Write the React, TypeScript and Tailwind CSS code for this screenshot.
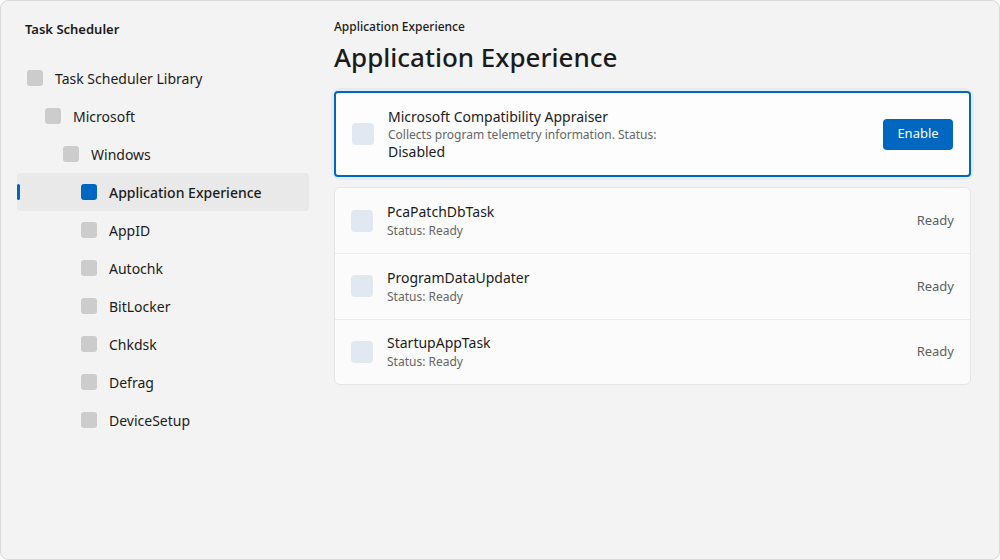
import React from "react";

const tree = [
  { label: "Task Scheduler Library", level: 0 },
  { label: "Microsoft", level: 1 },
  { label: "Windows", level: 2 },
  { label: "Application Experience", level: 3, selected: true },
  { label: "AppID", level: 3 },
  { label: "Autochk", level: 3 },
  { label: "BitLocker", level: 3 },
  { label: "Chkdsk", level: 3 },
  { label: "Defrag", level: 3 },
  { label: "DeviceSetup", level: 3 },
];
const pads = ["pl-[10px]", "pl-[28px]", "pl-[46px]", "pl-[64px]"];

const tasks = ["PcaPatchDbTask", "ProgramDataUpdater", "StartupAppTask"];

export default function App() {
  return (
    <div
      className="w-[1000px] h-[560px] bg-[#f3f3f3] border border-[#d9d9d9] rounded-lg flex text-[#1b1b1b] overflow-hidden"
      style={{ fontFamily: '"Segoe UI", "Noto Sans", "Open Sans", sans-serif' }}
    >
      <div className="w-[316px] shrink-0 pl-4 pr-2">
        <div className="pl-2 pt-[19px] text-[13px] font-semibold h-[58px]">Task Scheduler</div>
        <div className="flex flex-col">
          {tree.map((t) => (
            <div
              key={t.label}
              className={`relative h-[38px] flex items-center gap-3 rounded ${pads[t.level]} ${t.selected ? "bg-[#e9e9e9] font-medium" : ""}`}
            >
              {t.selected && <div className="absolute left-0 top-[11px] w-[3px] h-4 rounded bg-[#0067c0]" />}
              <div className={`w-4 h-4 rounded-[3px] ${t.selected ? "bg-[#0067c0]" : "bg-[#cccccc]"}`} />
              <span className="text-[14px]">{t.label}</span>
            </div>
          ))}
        </div>
      </div>
      <div className="flex-1 pl-[17px] pr-7">
        <div className="pt-[17px] text-[12px] font-medium">Application Experience</div>
        <div className="text-[26px] font-medium mt-[3px] leading-[36px]">Application Experience</div>
        <div className="mt-[16px] rounded-md ring-[3px] ring-[#e4ebf3]">
          <div className="h-[86px] border-2 border-[#0067c0] rounded bg-[#fdfdfd] flex items-center pl-4 pr-4">
            <div className="w-[22px] h-[22px] rounded bg-[#e1e8f2]" />
            <div className="ml-[14px] flex-1 leading-tight">
              <div className="text-[14px]">Microsoft Compatibility Appraiser</div>
              <div className="text-[12px] text-[#666] mt-[2px]">Collects program telemetry information. Status:</div>
              <div className="text-[14px] mt-[1px]">Disabled</div>
            </div>
            <button className="w-[70px] h-[31px] rounded bg-[#0067c0] text-white text-[13px]">Enable</button>
          </div>
        </div>
        <div className="mt-[10px] bg-[#fbfbfb] border border-[#e5e5e5] rounded-md">
          {tasks.map((t, i) => (
            <div key={t} className={`h-[65.3px] flex items-center pl-4 pr-4 ${i > 0 ? "border-t border-[#ebebeb]" : ""}`}>
              <div className="w-[22px] h-[22px] rounded bg-[#e1e8f2]" />
              <div className="ml-[14px] flex-1 leading-tight">
                <div className="text-[14px]">{t}</div>
                <div className="text-[12px] text-[#666] mt-[3px]">Status: Ready</div>
              </div>
              <div className="text-[13px] text-[#5f5f5f]">Ready</div>
            </div>
          ))}
        </div>
      </div>
    </div>
  );
}
